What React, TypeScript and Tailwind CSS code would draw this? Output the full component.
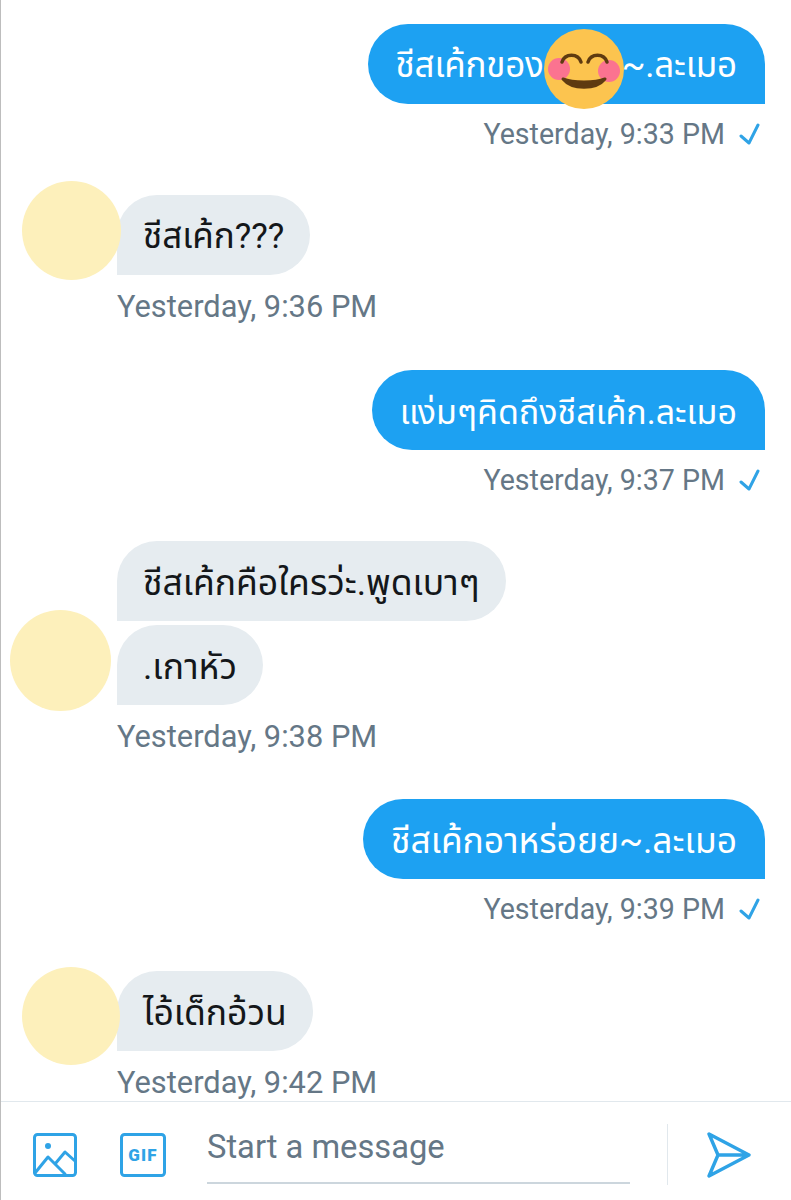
import type { ReactNode } from "react";

const thai = "font-['Roboto','Noto_Sans','Noto_Sans_Thai','Liberation_Sans',sans-serif]";

function Stamp({ time, sent }: { time: string; sent?: boolean }) {
  if (sent) {
    return (
      <div className="mt-[11px] flex h-[38px] items-center justify-end text-[28.6px] leading-[38px] text-[#657786] font-['Roboto',sans-serif]">
        <span>{time}</span>
        <svg className="ml-[14px] mr-[5px] h-[22px] w-[21px]" viewBox="0 0 21 22" fill="none" stroke="#2fa3e6" strokeWidth="3" strokeLinecap="round" strokeLinejoin="round">
          <path d="M2 13l8 7L19 2" />
        </svg>
      </div>
    );
  }
  return (
    <div className="mt-[13px] flex h-[38px] items-center text-[30.8px] leading-[38px] text-[#657786] font-['Roboto',sans-serif]">
      {time}
    </div>
  );
}

function Sent({ text, size, children }: { text: string; size: string; children?: ReactNode }) {
  return (
    <div className="flex justify-end">
      <div
        className={`relative flex h-[80px] items-center whitespace-nowrap rounded-t-[40px] rounded-bl-[40px] bg-[#1da1f2] px-[28px] pt-[5px] text-white ${thai} ${size}`}
      >
        {text}
        {children}
      </div>
    </div>
  );
}

function Received({ text, size = "text-[35.5px]" }: { text: string; size?: string }) {
  return (
    <div
      className={`flex h-[80px] w-fit items-center whitespace-nowrap rounded-r-[40px] rounded-tl-[40px] bg-[#e6ecf0] px-[26px] pt-[5px] text-[#14171a] ${thai} ${size}`}
    >
      {text}
    </div>
  );
}

function Avatar({ className }: { className: string }) {
  return <div className={`absolute rounded-full bg-[#fdf0bb] ${className}`} />;
}

function Smile() {
  return (
    <svg className="absolute right-[141px] top-[5px] h-[80px] w-[80px]" viewBox="0 0 80 80">
      <circle cx="40" cy="40" r="40" fill="#fcc44f" />
      <circle cx="15" cy="40" r="11" fill="#fb7390" />
      <circle cx="65" cy="42" r="11" fill="#fb7390" />
      <path d="M18 33c3-9 16-9 19 0M44 33c3-9 16-9 19 0" fill="none" stroke="#5f3b10" strokeWidth="3.5" strokeLinecap="round" />
      <path d="M19 50c9 11 33 11 42 0c-10 4-32 4-42 0z" fill="#5f3b10" stroke="#5f3b10" strokeWidth="3" strokeLinejoin="round" />
    </svg>
  );
}

export default function App() {
  return (
    <div className="flex h-[1200px] w-[791px] flex-col overflow-hidden border-l border-[#bdbdbd] bg-white">
      <div className="relative h-[1101px] overflow-hidden pl-[116px] pr-[26px] pt-[24px]">
        <Sent text="ชีสเค้กของเค้านะ~.ละเมอ" size="text-[35px] tracking-[-0.2px]">
          <Smile />
        </Sent>
        <Stamp time="Yesterday, 9:33 PM" sent />

        <div className="relative mt-[42px]">
          <Avatar className="left-[-95px] top-[-14px] h-[99px] w-[99px]" />
          <Received text="ชีสเค้ก???" size="text-[35px]" />
        </div>
        <Stamp time="Yesterday, 9:36 PM" />

        <div className="mt-[44px]">
          <Sent text="แง่มๆคิดถึงชีสเค้ก.ละเมอ" size="text-[34px]" />
        </div>
        <Stamp time="Yesterday, 9:37 PM" sent />

        <div className="relative mt-[42px] flex flex-col gap-[4px]">
          <Avatar className="left-[-107px] top-[69px] h-[101px] w-[101px]" />
          <Received text="ชีสเค้กคือใครว่ะ.พูดเบาๆ" />
          <Received text=".เกาหัว" />
        </div>
        <Stamp time="Yesterday, 9:38 PM" />

        <div className="mt-[43px]">
          <Sent text="ชีสเค้กอาหร่อยย~.ละเมอ" size="text-[35.4px]" />
        </div>
        <Stamp time="Yesterday, 9:39 PM" sent />

        <div className="relative mt-[43px]">
          <Avatar className="left-[-95px] top-[-4px] h-[98px] w-[98px]" />
          <Received text="ไอ้เด็กอ้วน" />
        </div>
        <Stamp time="Yesterday, 9:42 PM" />
      </div>

      <div className="flex h-[99px] items-start border-t border-[#e1e8ed]">
        <svg className="ml-[31px] mt-[30px] h-[46px] w-[46px]" viewBox="0 0 46 46" fill="none" stroke="#2fa3e6" strokeWidth="3" strokeLinejoin="round" strokeLinecap="round">
          <rect x="2.5" y="2.5" width="41" height="41" rx="3" />
          <circle cx="16" cy="14" r="3" fill="#2fa3e6" stroke="none" />
          <path d="M3 41l13-16 17 17M23 32l10-12 10 9" />
        </svg>
        <svg className="ml-[41px] mt-[30px] h-[46px] w-[48px]" viewBox="0 0 48 46" fill="none">
          <rect x="2.5" y="2.5" width="43" height="41" rx="3" stroke="#2fa3e6" strokeWidth="3" />
          <text x="24" y="29" textAnchor="middle" fill="#2fa3e6" fontSize="17" letterSpacing="1.2" fontWeight="900" fontFamily="Roboto, sans-serif">GIF</text>
        </svg>
        <div className="ml-[40px] mt-[20px] flex h-[62px] w-[423px] items-center border-b-2 border-[#ccd6dd] pb-[8px] text-[32.7px] text-[#657786] font-['Roboto',sans-serif]">
          Start a message
        </div>
        <div className="ml-[37px] mt-[22px] h-[61px] w-px bg-[#e1e8ed]" />
        <svg className="ml-[39px] mt-[30px] h-[46px] w-[44px]" viewBox="0 0 44 46" fill="none" stroke="#2fa3e6" strokeWidth="3.4" strokeLinejoin="round" strokeLinecap="round">
          <path d="M2 2l40 21L2 44l9-21zM11 23h31" />
        </svg>
      </div>
    </div>
  );
}
